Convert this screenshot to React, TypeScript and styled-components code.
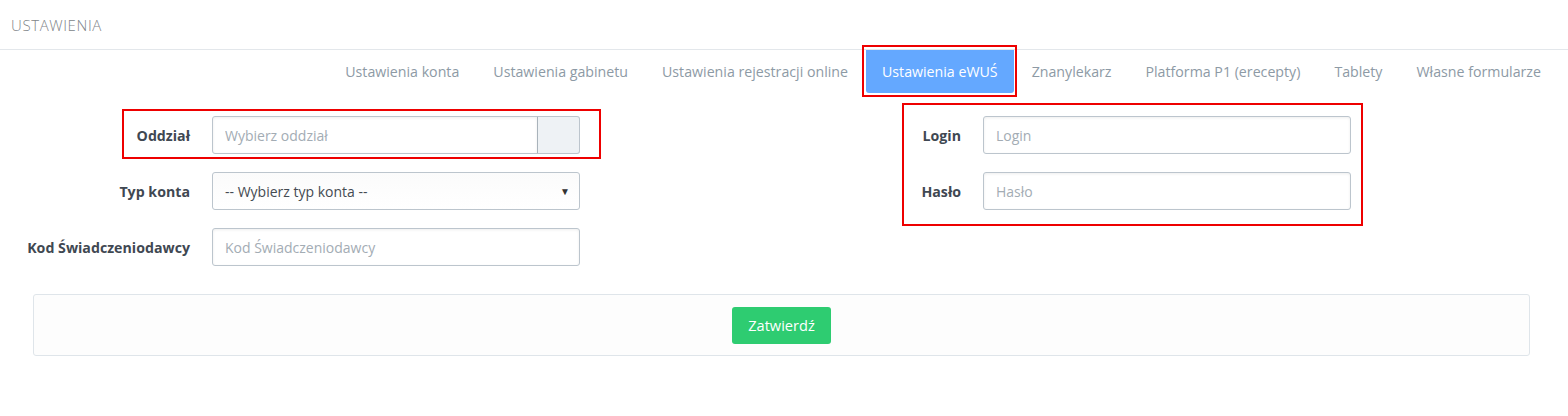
import React from 'react';
import styled, { createGlobalStyle } from 'styled-components';

const GlobalStyle = createGlobalStyle`
  html, body {
    margin: 0;
    padding: 0;
    background: #ffffff;
    font-family: "Open Sans", "Liberation Sans", Arial, sans-serif;
    font-size: 14px;
  }
  * { box-sizing: border-box; }
`;

const PageHeader = styled.header`
  height: 50px;
  display: flex;
  align-items: center;
  padding-left: 11px;
  border-bottom: 1px solid #e3e7eb;
  color: #808488;
  font-weight: 300;
  font-size: 15px;
  letter-spacing: 0.6px;
`;

const TabBar = styled.nav`
  display: flex;
  justify-content: flex-end;
  padding-right: 11px;
  height: 43px;
`;

const Tab = styled.a<{ $active?: boolean }>`
  position: relative;
  display: flex;
  align-items: center;
  height: 43px;
  padding: 0 16px;
  margin-left: 2px;
  border-radius: 0 0 3px 3px;
  font-size: 14.2px;
  color: ${p => (p.$active ? '#ffffff' : '#8d9aa5')};
  background: ${p => (p.$active ? '#64a8ff' : 'transparent')};
  text-decoration: none;
  cursor: pointer;
  white-space: nowrap;
`;

const Marker = styled.span`
  position: absolute;
  left: -4px;
  right: -3px;
  top: -5px;
  bottom: -4px;
  border: 2px solid #ee0000;
  pointer-events: none;
`;

const FormGrid = styled.div`
  display: grid;
  grid-template-columns: 771px 771px;
  padding-left: 15px;
  margin-top: 23px;
`;

const Column = styled.div`
  position: relative;
  display: flex;
  flex-direction: column;
  gap: 18px;
`;

const Row = styled.div`
  display: flex;
  align-items: center;
  height: 38px;
`;

const Label = styled.label`
  width: 175px;
  margin-right: 22px;
  text-align: right;
  font-weight: 700;
  font-size: 14.2px;
  color: #3f4852;
  white-space: nowrap;
`;

const InputGroup = styled.div`
  display: flex;
  width: 368px;
  height: 38px;
`;

const TextInput = styled.input<{ $addon?: boolean }>`
  width: ${p => (p.$addon ? '326px' : '368px')};
  height: 38px;
  padding: 0 12px;
  border: 1px solid #bcc5cd;
  border-radius: ${p => (p.$addon ? '3px 0 0 3px' : '3px')};
  box-shadow: inset 0 1px 3px rgba(0, 0, 0, 0.07);
  font-family: inherit;
  font-size: 14px;
  color: #444;
  outline: none;
  &::placeholder { color: #a3acb4; }
`;

const Addon = styled.span`
  width: 43px;
  height: 38px;
  background: #eef2f5;
  border: 1px solid #bcc5cd;
  border-left: 1px solid #a9b3bb;
  border-radius: 0 3px 3px 0;
  margin-left: -1px;
`;

const SelectBox = styled.div`
  display: flex;
  align-items: center;
  justify-content: space-between;
  width: 368px;
  height: 38px;
  padding: 0 9px 0 12px;
  border: 1px solid #bcc5cd;
  border-radius: 3px;
  background: linear-gradient(#fbfbfb, #ffffff);
  color: #444b52;
`;

const Caret = styled.span`
  font-size: 10px;
  color: #333;
`;

const Highlight = styled.span<{ $l: number; $t: number; $w: number; $h: number }>`
  position: absolute;
  left: ${p => p.$l}px;
  top: ${p => p.$t}px;
  width: ${p => p.$w}px;
  height: ${p => p.$h}px;
  border: 2px solid #ee0000;
  pointer-events: none;
`;

const ActionPanel = styled.div`
  margin: 28px 38px 0 33px;
  height: 62px;
  display: flex;
  align-items: center;
  justify-content: center;
  border: 1px solid #dfe5ea;
  border-radius: 3px;
  background: #fdfdfd;
`;

const SubmitButton = styled.button`
  height: 37px;
  padding: 0 16px;
  border: none;
  border-radius: 3px;
  background: #2ecc71;
  color: #ffffff;
  font-family: inherit;
  font-size: 14.6px;
  cursor: pointer;
`;

const tabs = [
  'Ustawienia konta',
  'Ustawienia gabinetu',
  'Ustawienia rejestracji online',
  'Ustawienia eWUŚ',
  'Znanylekarz',
  'Platforma P1 (erecepty)',
  'Tablety',
  'Własne formularze',
];

export default function App() {
  return (
    <>
      <GlobalStyle />
      <PageHeader>USTAWIENIA</PageHeader>
      <TabBar>
        {tabs.map(t => (
          <Tab key={t} $active={t === 'Ustawienia eWUŚ'}>
            {t}
            {t === 'Ustawienia eWUŚ' && <Marker />}
          </Tab>
        ))}
      </TabBar>
      <FormGrid>
        <Column>
          <Highlight $l={107} $t={-7} $w={479} $h={50} />
          <Row>
            <Label>Oddział</Label>
            <InputGroup>
              <TextInput $addon placeholder="Wybierz oddział" />
              <Addon />
            </InputGroup>
          </Row>
          <Row>
            <Label>Typ konta</Label>
            <SelectBox>
              <span>-- Wybierz typ konta --</span>
              <Caret>▼</Caret>
            </SelectBox>
          </Row>
          <Row>
            <Label>Kod Świadczeniodawcy</Label>
            <TextInput placeholder="Kod Świadczeniodawcy" />
          </Row>
        </Column>
        <Column>
          <Highlight $l={116} $t={-13} $w={461} $h={123} />
          <Row>
            <Label>Login</Label>
            <TextInput placeholder="Login" />
          </Row>
          <Row>
            <Label>Hasło</Label>
            <TextInput type="password" placeholder="Hasło" />
          </Row>
        </Column>
      </FormGrid>
      <ActionPanel>
        <SubmitButton>Zatwierdź</SubmitButton>
      </ActionPanel>
    </>
  );
}
